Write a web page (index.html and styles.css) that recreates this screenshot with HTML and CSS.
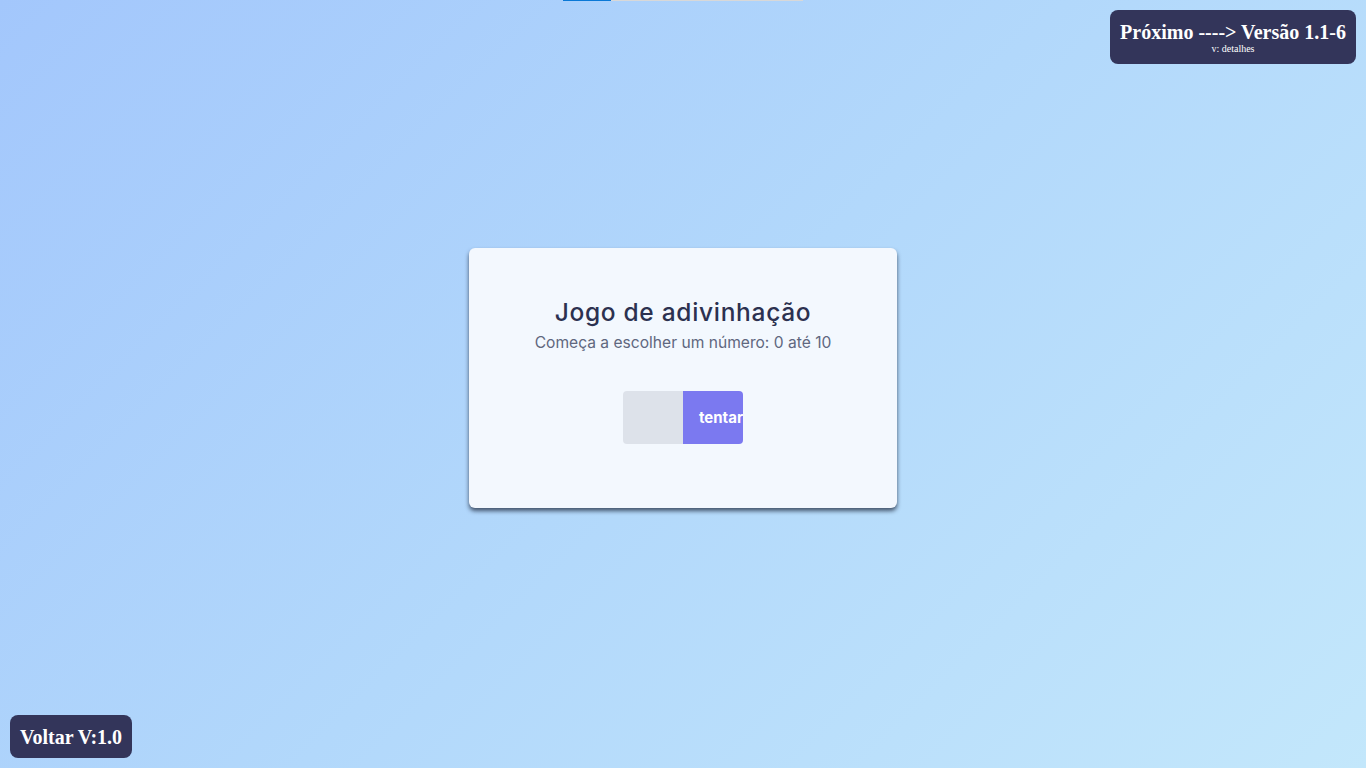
FILE: index.html
```html
<!DOCTYPE html>
<html lang="pt">
<head>
<meta charset="utf-8">
<title>Jogo de adivinhação</title>
<link rel="stylesheet" href="styles.css">
</head>
<body>
<div class="progress"><div class="progress-fill" style="width:20%"></div></div>
<main class="stage">
  <section class="card">
    <h1 class="title">Jogo de adivinhação</h1>
    <p class="subtitle">Começa a escolher um número: 0 até 10</p>
    <form class="guess" onsubmit="return false">
      <input class="guess-input" type="text">
      <button class="guess-btn" type="button"><span>tentar</span></button>
    </form>
  </section>
</main>
<a class="badge badge-next" href="#">
  <span class="badge-main">Próximo ----&gt; Versão 1.1-6</span>
  <span class="badge-sub">v: detalhes</span>
</a>
<a class="badge badge-back" href="#"><span class="badge-main">Voltar V:1.0</span></a>
</body>
</html>
```
FILE: styles.css
```css
html, body {
  margin: 0;
  height: 100%;
}
body {
  background: linear-gradient(135deg, #a3c7fc 0%, #b2d8fb 50%, #c3e7fb 100%);
  font-family: Inter, "Open Sans", sans-serif;
  overflow: hidden;
}
.progress {
  position: absolute;
  top: 0;
  left: 563px;
  width: 240px;
  height: 1px;
  background: #d8d8d8;
}
.progress-fill {
  height: 100%;
  background: #0a78d6;
}
.stage {
  height: 100%;
  display: flex;
  align-items: center;
  justify-content: center;
  padding-bottom: 12px;
  box-sizing: border-box;
}
.card {
  width: 428px;
  height: 260px;
  box-sizing: border-box;
  background: #f3f8fe;
  border-radius: 6px;
  box-shadow: 0 3px 4px rgba(30, 40, 60, 0.75);
  display: flex;
  flex-direction: column;
  align-items: center;
  padding-top: 48px;
}
.title {
  margin: 0;
  font-family: Inter, sans-serif;
  font-weight: 500;
  font-size: 24.5px;
  line-height: 32px;
  color: #2c3150;
  letter-spacing: 0.7px;
}
.subtitle {
  margin: 5px 0 0;
  font-family: Inter, sans-serif;
  font-size: 15.6px;
  line-height: 20px;
  color: #60677f;
}
.guess {
  margin-top: 38px;
  display: flex;
  border-radius: 4px;
  overflow: hidden;
}
.guess-input {
  width: 60px;
  height: 53px;
  box-sizing: border-box;
  border: none;
  background: #dde2ea;
  padding: 0;
  outline: none;
}
.guess-btn {
  width: 60px;
  height: 53px;
  border: none;
  background: #7b79f0;
  padding: 0 0 0 16px;
  color: #fff;
  font-family: Inter, sans-serif;
  font-weight: 700;
  font-size: 15px;
  text-align: left;
  white-space: nowrap;
  overflow: hidden;
}
.badge {
  position: fixed;
  background: #33355a;
  color: #fff;
  text-decoration: none;
  border-radius: 8px;
  display: flex;
  flex-direction: column;
  align-items: center;
  font-family: "Liberation Serif", serif;
  font-weight: 700;
}
.badge-main {
  font-size: 20px;
  line-height: 22px;
}
.badge-next {
  top: 10px;
  right: 10px;
  width: 246px;
  height: 54px;
  box-sizing: border-box;
  padding-top: 11px;
}
.badge-sub {
  font-size: 10px;
  line-height: 10px;
  font-weight: 400;
  margin-top: 1px;
}
.badge-back {
  left: 10px;
  bottom: 10px;
  width: 122px;
  height: 43px;
  box-sizing: border-box;
  justify-content: center;
}
```
